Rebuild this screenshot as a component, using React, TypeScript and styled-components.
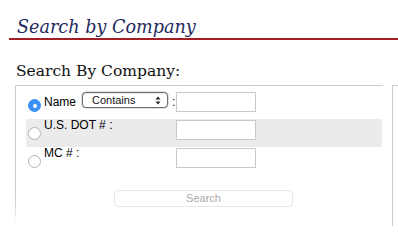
import styled, { createGlobalStyle } from "styled-components";

const GlobalStyle = createGlobalStyle`
  html, body {
    margin: 0;
    padding: 0;
    background: #fff;
    overflow: hidden;
  }
  body {
    font-family: "Liberation Sans", Arial, sans-serif;
  }
`;

const Page = styled.div`
  width: 398px;
  height: 232px;
  padding-left: 9px;
  box-sizing: border-box;
  overflow: hidden;
`;

const Title = styled.h1`
  margin: 0;
  padding: 17px 0 0 8px;
  font-family: "DejaVu Serif", Georgia, serif;
  font-style: italic;
  font-weight: normal;
  font-size: 17.6px;
  line-height: 21px;
  color: #1f2b5e;
  border-bottom: 2px solid #a31d24;
`;

const SubTitle = styled.h2`
  margin: 22px 0 4px 7px;
  font-family: "DejaVu Serif", Georgia, serif;
  font-weight: normal;
  font-size: 15.5px;
  line-height: 19px;
  color: #111;
`;

const Panels = styled.div`
  display: flex;
  gap: 9px;
  margin-left: 6px;
`;

const SearchBox = styled.div`
  width: 368px;
  height: 137px;
  box-sizing: border-box;
  padding: 5px 1px 0 10px;
  border-style: solid;
  border-width: 1px 0 0 1px;
  border-image: linear-gradient(to bottom, #cccccc 82%, rgba(204, 204, 204, 0)) 1;
`;

const SidePanel = styled.div`
  flex: 1;
  height: 140px;
  border-top: 1px solid #cccccc;
  border-left: 1px solid #cccccc;
`;

const Row = styled.div<{ $shaded?: boolean }>`
  display: grid;
  grid-template-columns: 18px 132px 80px;
  height: 28px;
  background: ${(p) => (p.$shaded ? "#ebebeb" : "transparent")};
`;

const Radio = styled.span<{ $checked?: boolean }>`
  display: block;
  width: 13px;
  height: 13px;
  margin: 8px 0 0 2px;
  box-sizing: border-box;
  border-radius: 50%;
  position: relative;
  background: ${(p) => (p.$checked ? "#3b8ff5" : "#fff")};
  border: 1px solid ${(p) => (p.$checked ? "#3b8ff5" : "#b4b4b4")};
  &::after {
    content: "";
    display: ${(p) => (p.$checked ? "block" : "none")};
    position: absolute;
    left: 3.5px;
    top: 3.5px;
    width: 4px;
    height: 4px;
    border-radius: 50%;
    background: #fff;
  }
`;

const LabelCell = styled.div<{ $top: number }>`
  display: flex;
  align-items: flex-start;
  margin-top: ${(p) => p.$top}px;
  font-size: 12px;
  line-height: 14px;
  color: #000;
`;

const Select = styled.div`
  display: flex;
  align-items: center;
  justify-content: space-between;
  width: 86px;
  height: 16px;
  margin: -3px 0 0 6px;
  padding: 0 6px 0 9px;
  box-sizing: border-box;
  border: 1px solid #6f6f6f;
  border-radius: 4px;
  box-shadow: 0 0 0 0.5px #bdbdbd, inset 0 1px 1px rgba(0, 0, 0, 0.08);
  background: #fff;
  font-size: 11px;
  line-height: 14px;
  color: #111;
`;

const Colon = styled.span`
  margin: 0 0 0 4px;
`;

const TextInput = styled.input`
  width: 80px;
  height: 20px;
  margin-top: 1px;
  box-sizing: border-box;
  border: 1px solid #c8c8c8;
  background: #fff;
  outline: none;
  padding: 0 3px;
`;

const ButtonRow = styled.div`
  padding: 13px 0 0 88px;
`;

const SearchButton = styled.button`
  width: 179px;
  height: 17px;
  padding: 0;
  border: 1px solid #e6e6e6;
  border-radius: 4px;
  background: #fff;
  font-family: "Liberation Sans", Arial, sans-serif;
  font-size: 11px;
  line-height: 15px;
  color: #a9a9a9;
`;

const Arrows = () => (
  <svg width="6" height="9" viewBox="0 0 6 9">
    <path d="M3 0.5 L5.5 3.5 H0.5 Z M3 8.5 L0.5 5.5 H5.5 Z" fill="#222" />
  </svg>
);

const fields = [
  { label: "U.S. DOT # :", shaded: true },
  { label: "MC # :", shaded: false },
];

export default function App() {
  return (
    <Page>
      <GlobalStyle />
      <Title>Search by Company</Title>
      <SubTitle>Search By Company:</SubTitle>
      <Panels>
        <SearchBox>
          <Row>
            <Radio $checked />
            <LabelCell $top={4}>
              Name
              <Select>
                <span>Contains</span>
                <Arrows />
              </Select>
              <Colon>:</Colon>
            </LabelCell>
            <TextInput />
          </Row>
          {fields.map((f) => (
            <Row key={f.label} $shaded={f.shaded}>
              <Radio />
              <LabelCell $top={-1}>{f.label}</LabelCell>
              <TextInput />
            </Row>
          ))}
          <ButtonRow>
            <SearchButton>Search</SearchButton>
          </ButtonRow>
        </SearchBox>
        <SidePanel />
      </Panels>
    </Page>
  );
}
